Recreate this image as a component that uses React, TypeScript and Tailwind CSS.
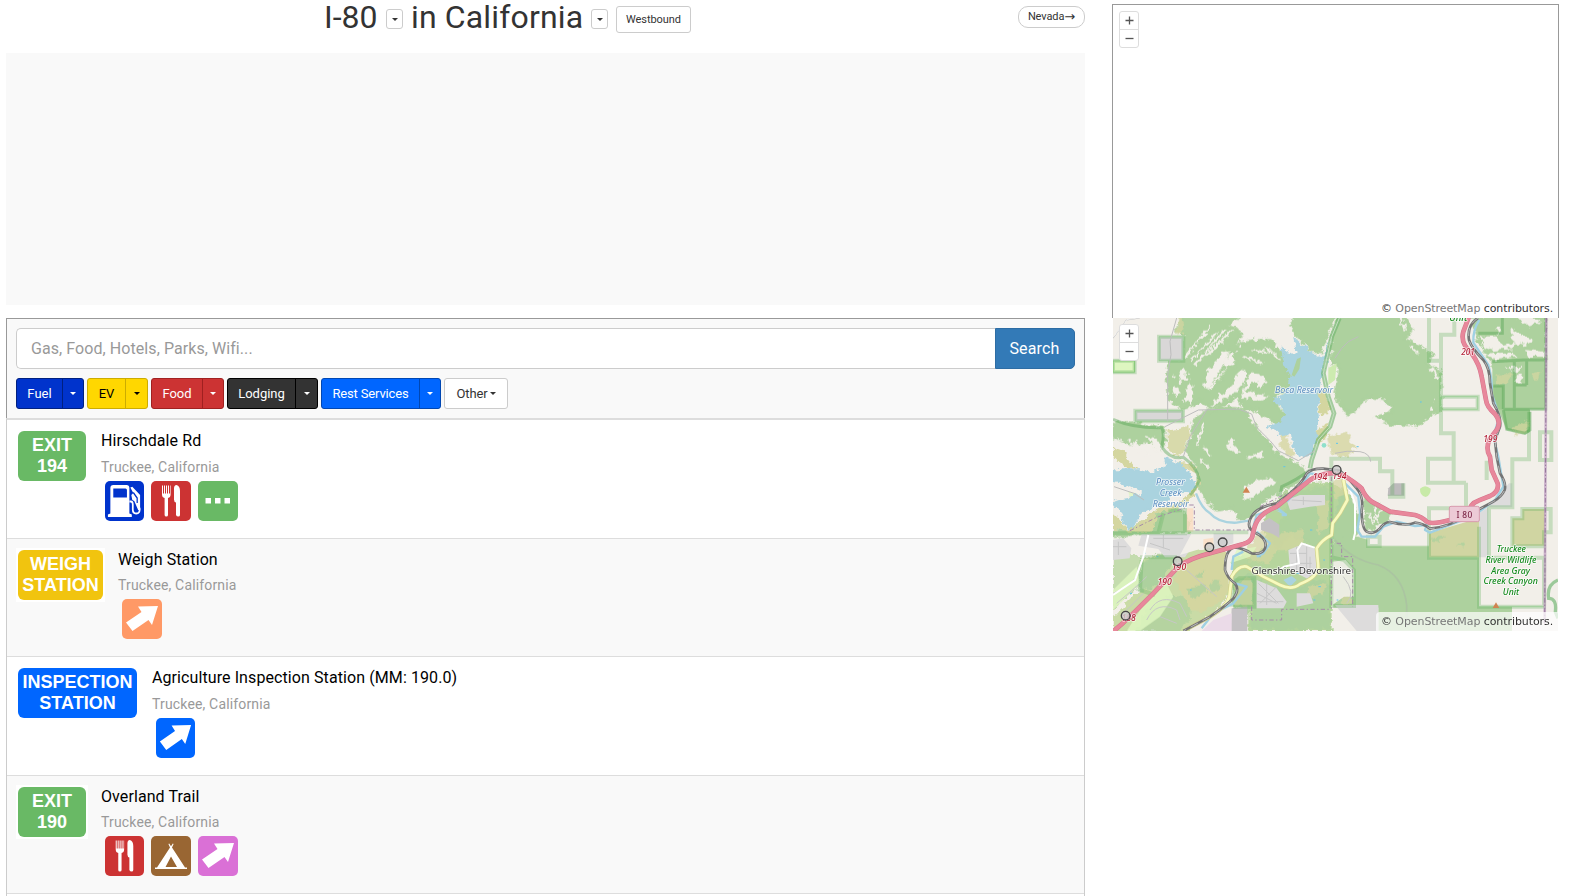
import React from "react";

function Caret({ className = "" }: { className?: string }) {
  return (
    <span
      className={
        "inline-block h-0 w-0 border-x-[3px] border-t-[3px] border-x-transparent border-t-current " + className
      }
    />
  );
}

function SplitButton({ label, color, left, right }: { label: string; color: string; left: string; right: string }) {
  return (
    <div className={"flex h-[31px] rounded-[3px] border text-[13px] leading-[29px] " + color}>
      <button className={"shrink-0 border-r border-inherit text-center whitespace-nowrap " + left}>{label}</button>
      <button className={"flex shrink-0 items-center justify-center " + right}>
        <Caret />
      </button>
    </div>
  );
}

function FuelIcon() {
  return (
    <svg viewBox="0 0 40 40" className="h-10 w-[39px] rounded-[5px] bg-[#0033cc]" preserveAspectRatio="none">
      <path
        fill="#fff"
        fillRule="evenodd"
        d="M3 36v-2.500l2.500-1V7q0-3 3-3H22q3 0 3 3v25.500l2.500 1V36zM8.500 7.500v9h14V9q0-1.500-1.500-1.500z"
      />
      <path fill="none" stroke="#fff" strokeWidth="1.800" d="M25 20.500h1.500q2 0 2 3v5q0 4 3.500 4 4 0 3.500-5L32 19" />
      <path fill="#fff" d="M26 6.500l2-.8 8 8.300v15h-2l-4-9-2-1-1-5 2-2z" />
      <path fill="none" stroke="#0033cc" strokeWidth="1.300" d="M29 11.500l4 5.500v5" />
    </svg>
  );
}

function FoodIcon({ className = "w-10" }: { className?: string }) {
  return (
    <svg viewBox="0 0 40 40" className={"h-10 rounded-[5px] bg-[#cc3333] " + className} preserveAspectRatio="none">
      <path
        fill="#fff"
        d="M11 4.500h1v8h1v-8h1v8h1v-8h1v8h1v-8h1v8h1v-8h.6v9q0 3-2.600 3.500V34q0 1.500-1.700 1.500T13.600 34V17Q11 16.500 11 13.500zM23 7.500Q23 4 25.500 4q3.500 1 3.500 6v24q0 1.500-1.700 1.500T25 34V21.500q-2-.5-2-3z"
      />
    </svg>
  );
}

function DotsIcon() {
  return (
    <svg viewBox="0 0 40 40" className="h-10 w-10 rounded-[5px] bg-[#69b965]">
      <path fill="#fff" d="M7.500 17h5.500v5.500H7.500zM17 17h5.500v5.500H17zM26.500 17H32v5.500h-5.500z" />
    </svg>
  );
}

function TentIcon() {
  return (
    <svg viewBox="0 0 40 40" className="h-10 w-10 rounded-[5px] bg-[#996633]">
      <path
        fill="#fff"
        fillRule="evenodd"
        d="M18.200 7.500l1.800 2.700 1.800-2.700.8.500-1.600 3.400 13 20.100h2V33H4v-1.500h2l13-20.100L17.400 8zM20 20.500L14.500 31H26z"
      />
    </svg>
  );
}

function ArrowIcon({ className }: { className: string }) {
  return (
    <svg viewBox="0 0 40 40" className={"h-10 rounded-[5px] " + className} preserveAspectRatio="none">
      <path fill="#fff" d="M16 7.500l20-.5-6 19-3.500-5L10.500 32 4 23.500 19.500 13z" />
    </svg>
  );
}

function Row({
  lines,
  badge,
  title,
  height,
  shade,
  town,
  children,
}: {
  lines: [string, string];
  badge: string;
  title: string;
  height: string;
  shade: string;
  town: string;
  children: React.ReactNode;
}) {
  return (
    <div className={"flex shrink-0 border-b border-[#ddd] pt-[9px] pl-[9px] " + height + " " + shade}>
      <div className="h-[54px] shrink-0 bg-white p-[2px]">
        <div
          className={
            "h-[50px] rounded-[6px] pt-[4px] text-center font-['Liberation_Sans',sans-serif] text-[18px] leading-[21px] font-bold whitespace-nowrap text-white " +
            badge
          }
        >
          {lines[0]}
          <br />
          {lines[1]}
        </div>
      </div>
      <div className="pl-[13px]">
        <div className="h-[26px] text-[16px] leading-[24px] tracking-[0.09px] text-black">{title}</div>
        <div className={"text-[14px] tracking-[0.16px] text-[#999] " + town}>Truckee, California</div>
        <div className="flex gap-[7px] pl-[4px]">{children}</div>
      </div>
    </div>
  );
}

function ZoomControl() {
  return (
    <div className="absolute top-[6px] left-[6px] flex w-[20px] flex-col rounded-[3px] border border-[#ddd] bg-white">
      <button className="flex h-[18px] items-center justify-center border-b border-[#ddd]">
        <svg viewBox="0 0 9 9" className="h-[9px] w-[9px]">
          <path d="M0.500 4.500h8M4.500 0.500v8" stroke="#555" strokeWidth="1.300" />
        </svg>
      </button>
      <button className="flex h-[17px] items-center justify-center">
        <svg viewBox="0 0 9 9" className="h-[9px] w-[9px]">
          <path d="M0.500 4.500h8" stroke="#555" strokeWidth="1.300" />
        </svg>
      </button>
    </div>
  );
}

function Attribution() {
  return (
    <div className="absolute right-0 bottom-0 h-[19px] w-[182px] rounded-tl-[4px] bg-white/70 pl-[5px] font-['DejaVu_Sans',sans-serif] text-[11px] leading-[20px] tracking-[-0.08px] whitespace-nowrap text-[#333]">
      © <span className="text-[#777]">OpenStreetMap</span> contributors.
    </div>
  );
}

const motorway =
  "M9 965L40 938 75 905 130 850 205 770Q240 745 300 730L400 702Q422 695 427 680 432 650 442 632 460 605 500 590L600 510Q625 492 660 490 690 488 715 505 745 525 755 535 765 560 785 575L840 605 915 615Q935 620 950 635 965 645 1020 630L1075 610Q1080 580 1105 572L1140 558Q1168 545 1163 520L1145 480 1140 440Q1125 415 1140 385L1160 360Q1175 335 1155 312 1130 290 1128 270L1115 200Q1110 165 1085 130 1050 100 1060 65L1077 20";
const railway =
  "M1104 24Q1070 45 1077 90 1085 115 1120 150 1140 175 1140 220L1150 280Q1175 320 1170 350L1155 390 1160 440 1170 490Q1190 520 1184 540 1175 560 1150 575L1075 615Q1020 650 960 656 940 640 915 638 890 650 840 636 825 635 810 655 790 675 770 665 755 655 755 600 762 560 740 535L710 500 690 482 640 476Q605 475 590 490 575 520 540 550L500 580Q440 590 423 622 408 650 430 665 475 685 465 715 455 735 425 730 400 715 375 712 345 715 345 780 352 805 375 820 390 840 370 865 350 885 300 920L220 963";
const river =
  "M1108 30Q1088 60 1090 98L1135 165Q1148 210 1145 250L1168 320 1150 380 1165 440 1175 500 1180 530 1155 570 1090 618 960 668 945 660 950 645 915 648 860 635 820 650 795 680 755 680 742 660 750 610 745 560 705 520M690 490L640 495 600 490 560 545 530 575M500 592L528 615 515 615M490 596L440 615 430 650M440 665L480 700 460 730 440 740M400 725L370 740 365 780M375 820L410 830 370 880 310 910 275 955";
const yellowRoad =
  "M225 960L300 920Q350 890 358 860L365 800Q385 765 410 770L460 800 510 825Q545 842 570 822 625 800 625 770L620 715Q635 690 665 675L668 640 690 610 712 570 700 510";
const bocaRoad = "M688 24L665 80 640 190 655 260 672 310 660 350 625 390 605 450 600 475";

function Label({
  x,
  y,
  w,
  size,
  fill,
  italic = true,
  children,
}: {
  x: number;
  y: number;
  w: number;
  size: number;
  fill: string;
  italic?: boolean;
  children: string;
}) {
  return (
    <text
      x={x}
      y={y}
      textAnchor="middle"
      textLength={w}
      lengthAdjust="spacingAndGlyphs"
      fontSize={size}
      fill={fill}
      fontStyle={italic ? "italic" : "normal"}
      stroke="#ffffffb0"
      strokeWidth="5"
      strokeLinejoin="round"
      paintOrder="stroke"
    >
      {children}
    </text>
  );
}

function LandCover() {
  return (
    <g transform="translate(0 -30)">
      {/* base tint of the valley floor */}
      <g filter="url(#rough)">
        <path fill="#c9dba6" d="M90 775L240 750 345 740 345 815 370 860 330 920 230 993H9V950L90 870z" />
        <path fill="#b6d59d" d="M470 630L520 580 600 550 665 545 690 560 715 640 665 700V993H415V925L370 920 365 780 410 760 480 745 460 690z" />
        <path fill="#c4dcae" d="M9 740L90 770 85 860 9 930z" />
      </g>

      {/* woodland */}
      <g filter="url(#rough)" fill="#add19e" stroke="#add19e" strokeWidth="9" strokeLinejoin="round">
        <path d="M215 50H385L350 75 385 90 395 100 365 150 330 180 345 200 310 240 285 262 300 275 330 240 360 200 380 190 370 150 390 130 430 122 485 122 500 150 535 172 530 205 545 250 515 280 490 290 505 325 540 360 510 375 470 350 440 330 400 322 385 290 350 310 300 322 270 300 240 320 215 325 180 300 172 240 178 180 215 180 225 105 200 95z" />
        <path d="M545 75L560 45H675L650 110 630 155 605 155 580 125 560 105z" />
        <path d="M275 340L330 323 400 328 440 390 480 430 490 455 530 480 580 505 585 530 510 575 460 600 425 650 385 655 370 625 320 630 290 600 265 560 262 510 245 470 225 450 245 420 250 370z" />
        <path d="M9 370L60 368 160 385 165 420 150 450 120 425 60 430 20 415 9 410z" />
        <path d="M690 45H875L905 90 885 115 930 140 965 165 950 190 990 215 990 290 990 330 960 345 920 375 840 370 800 350 835 340 850 325 820 295 770 290 745 320 715 345 690 310 675 280 690 200 665 190 670 100z" />
        <path d="M1090 50H1302V190L1240 205 1150 200 1125 150 1105 120z" />
        <path d="M9 695L60 690 130 650 180 620 225 640 240 695 130 700 9 710z" />
        <path d="M95 790L190 750 185 790 130 860 90 870z" />
        <path d="M80 993L110 935 180 890 240 900 235 960 200 993z" opacity="0.7" />
        <path d="M545 585L650 560 660 690 620 740 540 700 500 740 480 700 520 660z" opacity="0.7" />
        <path d="M380 850L420 825 470 860 540 870 640 840 655 860 655 985 425 985 430 930 380 920z" />
        <path d="M700 560L740 640 740 700 705 740 670 740 672 680z" />
        <path d="M763 590L795 610 840 640 835 665 800 675 770 690z" />
      </g>
      <path fill="#add19e" d="M700 710L745 710 772 718 772 738H957V773H1107V920H1206V993H805V922H670L665 740z" />
      <path fill="#add19e" d="M1147 185L1307 180V328H1258V395L1245 402 1190 390 1165 330 1147 290z" />
      <path fill="#9bc98d" d="M1150 258h30v70h-25zM1180 328H1260V395L1245 402 1188 388z" />
      <path fill="#a2cd95" d="M9 695H60l80-50 20-5-15 60H9zM370 922v-87h63v85z" opacity="0.7" />

      {/* clearings */}
      <g filter="url(#rough)" fill="#f2efe9">
        <path d="M345 150L355 160 320 230 290 268 280 255 300 220 290 215z" />
        <path d="M385 220L405 205 412 235 385 265 360 290 320 310 300 320 330 285 365 260z" />
        <path d="M425 220L450 222 470 245 455 265 430 245 410 270 400 260zM395 270L430 280 480 290 440 305 400 290z" />
        <path d="M205 210L225 210 230 240 210 250zM240 240L250 280 240 320 225 290zM190 255L215 274 205 290 185 275z" />
        <path d="M365 415L375 420 370 440 390 450 380 460 360 450 350 435zM410 470L450 455 460 470 410 475z" />
        <path d="M405 558L450 540 480 532 500 545 470 560 430 590 400 605z" />
        <path d="M1110 112h50l20 25 40-10-10 20-60 5-30-10zM1130 165l70-10 20 15-60 10zM1205 85l30 20 35 15-25 15-40-10zM1220 50l40 0 30 20-40 10zM1245 150l60 5v15l-50 0zM1155 80l20 0-10 25z" />
        <path d="M1190 200l50 0-20 20zM1220 220l20 10-5 22-20-10z" />
        <path d="M110 410l40 10 5 45-20-15zM60 425l40 15 20 30-40-20z" />
        <path d="M510 375l30-10 10 20-20 20z" />
      </g>
      <g stroke="#f2efe9" strokeWidth="6" fill="none" filter="url(#rough)">
        <path d="M228 170L300 75M240 185L320 100M255 195L345 90M275 180L365 90M300 160L350 105M430 150l50 10M470 140L510 180M400 170l60 20M280 370l-20 70M300 470l-20-30M270 480l25 20M500 440l-40-50M870 50l15 40M900 140l25 20M960 200l25 40M820 620l-25 40M790 620l15 50M775 640l15 30" />
      </g>
      <path
        d="M190 230l50-10M195 290l30 15M400 110l-30 70M380 250l40 30M960 170l20 60M975 300l-20 40M30 420l100 10"
        stroke="#f2efe9"
        strokeWidth="6"
        strokeDasharray="7 16 12 11"
        fill="none"
        filter="url(#rough)"
      />

      {/* scrub and heath */}
      <g filter="url(#rough)" fill="#d4d6a0">
        <path d="M9 440L35 450 60 480 82 505 50 508 9 470z" />
        <path d="M9 640L60 690 100 660 150 620 210 610 255 560 270 530 240 500 200 470 250 500 268 540 255 590 200 625 140 640 130 695 60 695 9 690z" />
        <path d="M172 390L235 378 240 410 210 470 175 455zM195 490L245 490 262 520 215 500z" opacity="0.85" />
        <path d="M640 268L660 308 655 338 630 345 622 275zM640 378l20-10-10 40-30 25-20-20z" />
        <path d="M215 785L290 755 345 745 345 815 365 850 340 900 280 935 240 930 215 880 195 830z" />
        <path d="M515 410l15-10 5 25 20 35-15 20-20-30-15-20zM650 410l60-15 25 45-20 30-50-5z" opacity="0.8" />
        <path d="M375 850l50-20 5 85-55 5z" opacity="0.6" />
        <path d="M465 680l40 20 80-10-20 60-60 0-30 40-60-10-20-20zM620 610l40-10-5 90-30 10zM590 860l60-10-10 30-40 10zM670 540l30-10 10 50-40 20zM690 890l30-10 10 30-30 10z" opacity="0.7" />
        <path d="M1160 225l50-5-20 30-30 10zM1265 220l30-5-15 30zM1205 380l50-15-5 30-30 10zM205 55l20 10-10 40-15 0z" opacity="0.75" />
      </g>
      <path fill="#d0d5a2" d="M957 700L1020 680 1107 655V773H957zM1207 655h30v-28h67v110h-97z" />
      <path fill="#add19e" filter="url(#rough)" opacity="0.8" d="M225 870l50-20 20 20-40 30zM300 850l20-10 15 20-30 20zM260 830l20-20-5 30zM960 715l40-10-10 20zM1040 730l20 0v15z" />
      <g fill="#def6c0">
        <path d="M9 182h65v35H9z" stroke="#8fd07c" strokeWidth="3" />
        <path d="M9 870L80 800 88 850 30 910 9 930zM110 900l60-50 20 40-40 60-60 43H50z" opacity="0.85" />
        <path d="M380 750l60-10-20 30-60 20zM55 575l25 5-5 15-15 0z" opacity="0.8" />
        <path d="M930 566q15-15 32 0 0 20-15 25-18-5-17-25z" fill="#c8eaa8" />
        <path d="M655 205l25-15-5 50-20 15z" fill="#cdebb0" />
      </g>

      {/* built-up and industrial land */}
      <g fill="#dddcdc">
        <path d="M147 110h73v72h-73zM76 332h143v32H76z" fill="#d9d7d7" />
        <path d="M95 702h150v40l-20 30-60 0-20-25-60-10zM310 700h60v30l-60 20z" />
        <path d="M535 750l50-20 35 20 5 50-25 40-60-30zM530 600l40-15 30 0 45 0 0 30-45 5-60 10z" />
        <path d="M440 840l60 25 30 40-10 20h-80zM9 720l30-5 25 30-5 30-50 5zM675 915h130v78H740zM560 880l40 0 10 30-50 10z" />
        <path d="M1107 640l30-20 60-70 10 0v72h-72v150h-28z" />
      </g>
      <path d="M835 565l15-15h33v37h-50z" fill="#bdbbbc" />
      <path d="M453 670l25-16 30 20v40l-20-12-35-12zM365 925l47-5v73h-50z" fill="#c4c1c4" />
      <path d="M310 960l55-20v53h-90z" fill="#ebdbe8" />
      <path d="M667 785l40-5 25 30v80l-30 0-35 25z" fill="#f2efe9" opacity="0.9" />
      <path d="M255 600l30 10 30 35 60 20 45-8 10 30H255z" fill="#f2efe9" />
      <path d="M245 700h65v35l-100 30z" fill="#f2efe9" />
      <path d="M280 718l30-5v30h-30zM230 625h20v70h-20z" fill="#fbdcc0" opacity="0.8" />
      <g stroke="#c6c6c6" strokeWidth="3" fill="none">
        <path d="M540 760h50M545 790h60M560 740v70M590 740v80M600 830v-60M545 600l90 5M580 590v25M445 850l60 60M440 880l60 30M500 860l-50 50M440 905h80M470 850v65M130 715h90M120 730l60 20M160 705v40M9 740h40M25 725v40" />
        <path d="M9 880q60-20 80-70M20 910q60-50 90-80M120 930q30-50 90-20l20 40M110 960q30-60 90-30l10 30M150 950l50 20M40 940l60-60M230 810l90 80M700 830q40 50 10 80" />
      </g>

      {/* lakes */}
      <g fill="#aad3df">
        <path
          filter="url(#rough)"
          stroke="#aad3df"
          strokeWidth="5"
          d="M515 145L530 155 560 165 553 115 575 135 600 160 635 175 650 150 655 125 652 160 638 200 628 260 622 320 625 370 618 410 605 460 570 470 548 430 545 400 520 410 500 390 475 380 515 370 525 340 515 320 490 298 515 295 535 270 545 230 525 195z"
        />
        <path d="M545 225l16-48 12-5-5 35-15 23z" fill="#add19e" />
        <path
          filter="url(#rough)"
          stroke="#aad3df"
          strokeWidth="9"
          strokeLinejoin="round"
          d="M9 512L90 512 130 522 175 500 168 480 200 490 225 510 252 558 235 572 200 570 170 600 135 615 95 635 62 682 45 665 30 630 14 615V605L60 597 115 575 95 570 60 555 9 540z"
        />
        <circle cx="642" cy="436" r="7" fill="#8fe0cc" />
        <path d="M520 840l25-12 15 12-20 20zM495 630l35 10-5 6z" />
      </g>
      <path
        d="M678 430h6M740 440h6M520 500h6M100 760h6M140 770h5M600 690h7M640 780h5M560 820h9M610 900h6M625 860h8M60 880h6M445 770h7M930 306h5M240 870h5M680 900h5"
        stroke="#5cc4ee"
        strokeWidth="3"
      />
      <path d="M258 580Q275 625 300 640 325 670 380 668L415 662" stroke="#aad3df" strokeWidth="7" fill="none" />
    </g>
  );
}

function Boundaries() {
  return (
    <g transform="translate(0 -30)" fill="none">
      <g stroke="#5fae5c" strokeOpacity="0.3" strokeWidth="12">
        <path d="M147 110h73v72h-73zM76 332h143v32H76zM9 182h65v35H9zM957 50V182h35M1033 50v54H993V400h38v148h-77v-72h77M993 290h110v38H993M664 540V476H810v38h37v71M834 590h46v-40M1068 548v72M1031 548h37M957 690V625H1020M957 690v83h150M1107 680v240h195V773h-165V622h70V478h50V335M1207 655h30v-28h85v70h-20v42h-95zM1290 397h34v83h-34zM1130 540V482M774 710h35v28h-35zM1103 290v38" />
        <path d="M9 700H225V630L175 632M160 640l-15 60M225 697H415M90 772h105v40M95 780l-5 90 45 15M370 920h63v-85h-45l-20 15-3 70M664 540V918h68V810l-30-30-36-8" />
      </g>
      <g stroke="#4b9f4b" strokeOpacity="0.4" strokeWidth="9">
        <path d="M1105 100h72V50M1147 185L1240 180 1307 180V328H1180M1213 185v140M1213 255h37M1250 180v75M1150 258h30v70M1180 330l10 58 55 12 15-10V335" />
        <path d="M9 358Q70 385 155 383 165 400 155 440 180 480 220 472 260 500 268 540 255 570 240 585M600 510Q560 540 515 560l-5 30M1307 50v130" />
      </g>
      <g stroke="#8ccc88" strokeOpacity="0.8" strokeWidth="2.500">
        <path d="M147 110h73v72h-73zM76 332h143v32H76zM993 290h110v38H993zM957 773h150M1107 920h195" />
      </g>
      <path d="M1344 840q-35 15-28 55 25 0 20 40l8 20" stroke="#9cc99a" strokeWidth="10" />
    </g>
  );
}

function TerrainMap() {
  return (
    <svg viewBox="9 24 1335 939" preserveAspectRatio="none" className="block h-[313px] w-[445px] bg-[#f2efe9]" fontFamily="'Noto Sans', sans-serif">
      <defs>
        <filter id="rough" x="-5%" y="-5%" width="110%" height="110%" colorInterpolationFilters="sRGB">
          <feTurbulence type="fractalNoise" baseFrequency="0.06" numOctaves="3" seed="7" />
          <feDisplacementMap in="SourceGraphic" scale="24" xChannelSelector="R" yChannelSelector="G" />
        </filter>
      </defs>
      <LandCover />
      <Boundaries />

      <path d={bocaRoad} stroke="#6db36a" strokeOpacity="0.6" strokeWidth="14" fill="none" />
      <path d={bocaRoad} stroke="#c4dfc0" strokeWidth="3" fill="none" />

      {/* tracks and minor roads */}
      <g fill="none" stroke="#bdbdbd" strokeWidth="3">
        <path d="M9 85l40-55 40-6M200 24l-20 70 3 40-10 60 0 140M165 350l50-25 50-25 120-3 40 15 15 40 40 40 25 30 60 30 50-30M290 300L240 380 220 440M675 145l20-30 20-20 30-15M675 430q35-10 75-5 30 5 32 30M12 530l60 20 30 20" />
        <path d="M9 83l42-54 38-6" stroke="#fff" strokeWidth="2" />
        <path d="M675 690q50 60 130 75 75 30 85 120v70" strokeWidth="5" stroke="#a9bfa2" opacity="0.7" />
      </g>
      <path
        d="M9 855L75 810 100 740 115 675M620 715l-45-15-13 20 5 40-45 10-35 25M720 540l15 40v90l-5 20"
        fill="none"
        stroke="#fff"
        strokeWidth="6"
      />
      <path d="M1309 24L1304 940" stroke="#b48cb8" strokeWidth="8" opacity="0.6" />
      <path d="M1309 24L1304 940" stroke="#8c6d93" strokeWidth="2.500" strokeDasharray="14 6 4 6" />
      <path
        d="M238 585h15v75h165M450 590L530 550M425 890v40h90v-32h145M664 500v400M680 700h15v40h33v150M60 662l80-40 90-30"
        stroke="#a58aa8"
        strokeWidth="3"
        fill="none"
        strokeDasharray="13 7 4 7"
      />

      {/* river, railway, highway */}
      <path d={river} stroke="#9fd0e3" strokeWidth="7" fill="none" strokeLinejoin="round" />
      <path d={yellowRoad} stroke="#d0d08a" strokeWidth="12" fill="none" strokeLinejoin="round" />
      <path d={yellowRoad} stroke="#f7fabf" strokeWidth="8" fill="none" strokeLinejoin="round" />
      <path d={railway} stroke="#747474" strokeWidth="8" fill="none" />
      <path d={railway} stroke="#c4c4c4" strokeWidth="2.500" fill="none" strokeDasharray="24 16" />
      <path d={motorway} stroke="#d4748a" strokeWidth="14" fill="none" strokeLinejoin="round" />
      <path d={motorway} stroke="#e8879b" strokeWidth="11" fill="none" strokeLinejoin="round" />

      {/* labels */}
      <Label x={582} y={248} w={174} size={24} fill="#5a8dc0">Boca Reservoir</Label>
      <Label x={181} y={526} w={86} size={24} fill="#5a8dc0">Prosser</Label>
      <Label x={182} y={558} w={66} size={24} fill="#5a8dc0">Creek</Label>
      <Label x={182} y={590} w={108} size={24} fill="#5a8dc0">Reservoir</Label>
      <Label x={574} y={791} w={299} size={28} fill="#333" italic={false}>Glenshire-Devonshire</Label>
      <g fontWeight="500">
        <Label x={1204} y={727} w={88} size={25} fill="#168b1e">Truckee</Label>
        <Label x={1203} y={759} w={153} size={25} fill="#168b1e">River Wildlife</Label>
        <Label x={1202} y={791} w={116} size={25} fill="#168b1e">Area Gray</Label>
        <Label x={1202} y={823} w={163} size={25} fill="#168b1e">Creek Canyon</Label>
        <Label x={1203} y={855} w={49} size={25} fill="#168b1e">Unit</Label>
        <Label x={1045} y={34} w={54} size={25} fill="#168b1e">Unit</Label>
        <Label x={1074} y={135} w={41} size={26} fill="#b5253a">201</Label>
        <Label x={1141} y={395} w={42} size={26} fill="#b5253a">199</Label>
        <Label x={630} y={511} w={43} size={26} fill="#b5253a">194</Label>
        <Label x={688} y={506} w={43} size={26} fill="#b5253a">194</Label>
        <Label x={207} y={779} w={43} size={26} fill="#b5253a">190</Label>
        <Label x={164} y={824} w={43} size={26} fill="#b5253a">190</Label>
        <Label x={56} y={934} w={43} size={26} fill="#b5253a">188</Label>
      </g>
      <path d="M409 530l11 18h-22zM1158 877l10 17h-20z" fill="#d08350" />
      <rect x="1018" y="589" width="90" height="46" rx="5" fill="#eccad6" stroke="#d89aae" strokeWidth="3" />
      <text x="1063" y="623" textAnchor="middle" fontSize="25" textLength="47" fill="#7d2748" fontWeight="500">
        I 80
      </text>
      <g fill="#cdcdcdd0" stroke="#444" strokeWidth="4">
        <circle cx="47" cy="917" r="13" />
        <circle cx="203" cy="754" r="13" />
        <circle cx="298" cy="712" r="13" />
        <circle cx="338" cy="697" r="13" />
        <circle cx="680" cy="480" r="13" />
      </g>
    </svg>
  );
}

export default function App() {
  return (
    <div className="flex h-[896px] w-full overflow-hidden bg-white pl-[6px] font-[Roboto,sans-serif] text-[#333]">
      <main className="flex w-[1079px] shrink-0 flex-col">
        <header className="flex h-[53px] shrink-0 items-start pl-[318px] text-[32px] leading-[35px] whitespace-nowrap">
          <h1 className="w-[62px]">I-80</h1>
          <button className="mt-[9px] flex h-[20px] w-[17px] items-center justify-center rounded-[3px] border border-[#ccc]">
            <Caret />
          </button>
          <span className="w-[188px] pl-[8px] tracking-[0.15px]">in California</span>
          <button className="mt-[9px] flex h-[20px] w-[17px] items-center justify-center rounded-[3px] border border-[#ccc]">
            <Caret />
          </button>
          <button className="mt-[6px] ml-[8px] h-[27px] w-[75px] rounded-[3px] border border-[#ccc] text-center text-[11px] leading-[22px] tracking-[-0.05px]">
            Westbound
          </button>
          <button className="mt-[6px] ml-auto flex h-[22px] w-[67px] items-center justify-center rounded-[10px] border border-[#ccc] text-[11px] leading-[18px] tracking-[-0.1px]">
            Nevada<span className="font-['DejaVu_Sans',sans-serif] text-[13px] leading-[18px]">→</span>
          </button>
        </header>
        <div className="h-[252px] shrink-0 bg-[#f9f9f9]" />
        <section className="mt-[13px] flex h-[100px] shrink-0 flex-col border border-b-0 border-[#999] bg-[#f9f9f9] px-[9px] pt-[9px]">
          <div className="flex h-[41px]">
            <div className="flex-1 rounded-l-[5px] border border-r-0 border-[#ccc] bg-white pl-[14px] text-[16px] leading-[39px] tracking-[0.07px] text-[#999]">
              Gas, Food, Hotels, Parks, Wifi...
            </div>
            <button className="w-[80px] rounded-r-[5px] border border-[#2e6da4] bg-[#337ab7] pr-px text-[16px] leading-[38px] tracking-[0.15px] text-white">
              Search
            </button>
          </div>
          <div className="mt-[9px] flex gap-[3px]">
            <SplitButton label="Fuel" color="border-[#002080] bg-[#0033cc] text-white" left="w-[46px]" right="w-[20px]" />
            <SplitButton label="EV" color="border-[#ccac00] bg-[#ffd700] text-black" left="w-[38px]" right="w-[21px]" />
            <SplitButton label="Food" color="border-[#a02020] bg-[#cc3333] text-white" left="w-[51px]" right="w-[20px]" />
            <SplitButton label="Lodging" color="border-black bg-[#333] text-white" left="w-[68px]" right="w-[21px]" />
            <SplitButton label="Rest Services" color="border-[#0047b3] bg-[#0066ff] text-white tracking-[-0.15px]" left="w-[98px]" right="w-[20px]" />
            <button className="flex h-[31px] w-[64px] items-center justify-center gap-[2px] rounded-[3px] border border-[#ccc] bg-white text-[13px] tracking-[-0.1px]">
              Other
              <Caret />
            </button>
          </div>
        </section>
        <section className="flex flex-1 flex-col overflow-hidden border-x border-t-2 border-x-[#ccc] border-t-[#ddd]">
          <Row
            lines={["EXIT", "194"]}
            badge="w-[68px] bg-[#69b965]"
            title="Hirschdale Rd"
            height="h-[119px]"
            shade="bg-white"
            town="h-[26px] leading-[24px]"
          >
            <FuelIcon />
            <FoodIcon />
            <DotsIcon />
          </Row>
          <Row
            lines={["WEIGH", "STATION"]}
            badge="w-[85px] bg-[#f1c40f]"
            title="Weigh Station"
            height="h-[118px]"
            shade="bg-[#f9f9f9]"
            town="h-[25px] leading-[22px]"
          >
            <ArrowIcon className="w-10 bg-[#ff9966]" />
          </Row>
          <Row
            lines={["INSPECTION", "STATION"]}
            badge="w-[119px] bg-[#0066ff]"
            title="Agriculture Inspection Station (MM: 190.0)"
            height="h-[119px]"
            shade="bg-white"
            town="h-[26px] leading-[24px]"
          >
            <ArrowIcon className="w-[39px] bg-[#0066ff]" />
          </Row>
          <Row
            lines={["EXIT", "190"]}
            badge="w-[68px] bg-[#69b965]"
            title="Overland Trail"
            height="h-[118px]"
            shade="bg-[#f9f9f9]"
            town="h-[25px] leading-[22px]"
          >
            <FoodIcon className="w-[39px]" />
            <TentIcon />
            <ArrowIcon className="w-10 bg-[#da70d6]" />
          </Row>
        </section>
      </main>
      <aside className="ml-[27px] w-[447px] pt-[4px]">
        <div className="relative h-[314px] border border-b-0 border-[#999]">
          <ZoomControl />
          <Attribution />
        </div>
        <div className="relative ml-px h-[313px] w-[445px]">
          <TerrainMap />
          <ZoomControl />
          <Attribution />
        </div>
      </aside>
    </div>
  );
}
